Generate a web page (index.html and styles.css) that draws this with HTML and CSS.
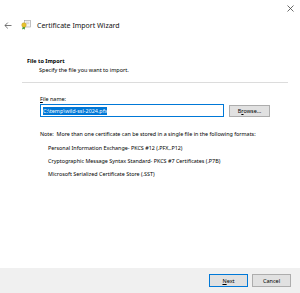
FILE: index.html
```html
<!DOCTYPE html>
<html lang="en">
<head>
    <meta charset="UTF-8">
    <title>Certificate Import Wizard</title>
    <link rel="stylesheet" href="styles.css">
</head>
<body>
    <div class="window">
        <div class="caption">
            <svg class="close" width="7" height="7" viewBox="0 0 7 7">
                <path d="M0.5 0.5 L6.5 6.5 M6.5 0.5 L0.5 6.5" stroke="#444" stroke-width="0.8"/>
            </svg>
        </div>
        <div class="header">
            <svg class="back" width="8" height="7" viewBox="0 0 8 7">
                <path d="M7.5 3.5 H1 M3.8 0.6 L0.9 3.5 L3.8 6.4" stroke="#555" stroke-width="0.8" fill="none"/>
            </svg>
            <svg class="cert-icon" width="10" height="10" viewBox="0 0 10 10">
                <rect x="3.5" y="0.5" width="6" height="6.5" fill="#f4f4f4" stroke="#9a9a9a" stroke-width="0.6"/>
                <path d="M5 2.2 H8.2 M5 3.6 H8.2" stroke="#b5b5b5" stroke-width="0.5"/>
                <path d="M2 6 L1 9.6 L2.6 8.8 L3.6 9.8 L4.2 6.6 Z" fill="#3c9a3c"/>
                <circle cx="3" cy="5" r="2.3" fill="#e8c431" stroke="#b58f12" stroke-width="0.4"/>
            </svg>
            <span class="title">Certificate Import Wizard</span>
        </div>

        <div class="content">
            <div class="section-title">File to Import</div>
            <div class="section-sub">Specify the file you want to import.</div>
        </div>
        <div class="separator"></div>

        <div class="form">
            <label class="label"><u>F</u>ile name:</label>
            <div class="file-row">
                <div class="input"><span class="selected">C:\temp\wild-ssl-2024.pfx</span></div>
                <button class="btn browse">B<u>r</u>owse...</button>
            </div>
            <p class="note">Note:&nbsp; More than one certificate can be stored in a single file in the following formats:</p>
            <ul class="formats">
                <li>Personal Information Exchange- PKCS #12 (.PFX,.P12)</li>
                <li>Cryptographic Message Syntax Standard- PKCS #7 Certificates (.P7B)</li>
                <li>Microsoft Serialized Certificate Store (.SST)</li>
            </ul>
        </div>

        <div class="footer">
            <button class="btn default"><u>N</u>ext</button>
            <button class="btn">Cancel</button>
        </div>
    </div>
</body>
</html>
```

FILE: styles.css
```css
body {
    margin: 0;
    font-family: "Noto Sans", "Open Sans", sans-serif;
    background-color: #fff;
    color: #000;
}
.window {
    width: 300px;
    height: 293px;
    display: flex;
    flex-direction: column;
    overflow: hidden;
}
.caption {
    height: 17px;
    display: flex;
    justify-content: flex-end;
    align-items: center;
    padding-right: 6px;
}
.header {
    height: 16px;
    display: flex;
    align-items: center;
    padding-left: 4px;
}
.back {
    margin-right: 9px;
}
.cert-icon {
    margin-right: 6px;
}
.title {
    font-size: 7px;
    color: #111;
}
.content {
    margin-top: 24px;
    padding-left: 27px;
}
.section-title {
    font-size: 5.5px;
    font-weight: bold;
    line-height: 8px;
}
.section-sub {
    font-size: 5.5px;
    line-height: 8px;
    margin-top: 1px;
    padding-left: 12px;
}
.separator {
    margin: 8px 12px 0 22px;
    border-top: 1px solid #dcdcdc;
}
.form {
    padding-left: 40px;
    margin-top: 12px;
    font-size: 5.4px;
}
.label {
    display: block;
    line-height: 8px;
}
.file-row {
    display: flex;
    align-items: center;
    margin-top: 1px;
}
.input {
    width: 180px;
    height: 11px;
    border: 1px solid #0078d7;
    display: flex;
    align-items: center;
    padding-left: 2px;
}
.selected {
    background-color: #0078d7;
    color: #fff;
    line-height: 8px;
}
.btn {
    font-family: inherit;
    font-size: 5.5px;
    background-color: #e1e1e1;
    border: 1px solid #adadad;
    color: #000;
    padding: 0;
    height: 12px;
}
.browse {
    width: 41px;
    margin-left: 5px;
}
.note {
    margin: 13px 0 0 0;
    line-height: 8px;
}
.formats {
    list-style: none;
    margin: 6px 0 0 0;
    padding-left: 8px;
}
.formats li {
    line-height: 8px;
    margin-bottom: 5px;
}
.footer {
    margin-top: auto;
    height: 25px;
    background-color: #f0f0f0;
    display: flex;
    justify-content: flex-end;
    align-items: center;
    padding-right: 9px;
    gap: 4px;
}
.footer .btn {
    width: 39px;
    height: 13px;
}
.footer .default {
    border: 1px solid #0078d7;
}
```
